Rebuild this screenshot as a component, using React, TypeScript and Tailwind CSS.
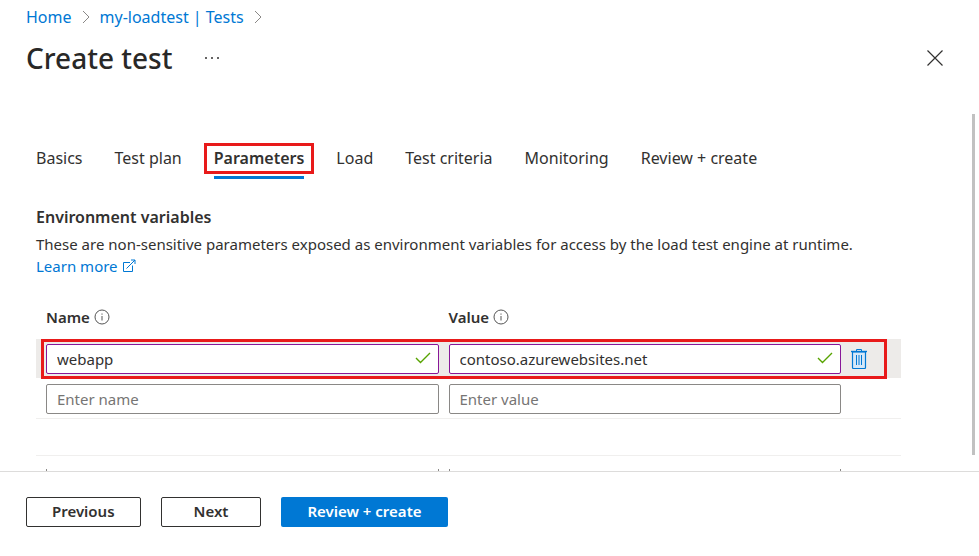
import type { ReactNode } from 'react';

const tabs = ['Basics', 'Test plan', 'Parameters', 'Load', 'Test criteria', 'Monitoring', 'Review + create'];

function Chevron() {
  return (
    <svg viewBox="0 0 8 14" className="h-3.5 w-2" fill="none" stroke="#8a8886" aria-hidden="true">
      <path d="M1 1l6 6-6 6" />
    </svg>
  );
}

function InfoIcon() {
  return (
    <svg viewBox="0 0 16 16" className="size-4" fill="none" stroke="#555" aria-hidden="true">
      <circle cx="8" cy="8" r="7" />
      <path d="M8 7v4.500M8 4.500v1.200" />
    </svg>
  );
}

function ExternalIcon() {
  return (
    <svg viewBox="0 0 14 14" className="size-3.5" fill="none" stroke="#0078d4" aria-hidden="true">
      <path d="M8 3.500H1.500v9h9V6.500M4.500 9.500l8.500-8.500M9 1h4v4" />
    </svg>
  );
}

function CheckIcon() {
  return (
    <svg viewBox="0 0 16 12" className="pointer-events-none absolute top-2 right-2 h-3 w-4" fill="none" stroke="#57a300" strokeWidth="1.4" aria-hidden="true">
      <path d="M1 6l4.500 4.500L15 1" />
    </svg>
  );
}

function TrashIcon() {
  return (
    <svg viewBox="0 0 16 20" className="h-5 w-4" fill="none" stroke="#0078d4" aria-hidden="true">
      <path d="M1.500 3v15.500a1 1 0 001 1h11a1 1 0 001-1V3z" fill="#d5e8f8" strokeWidth="1.200" />
      <path d="M0 2.500h16" strokeWidth="1.400" />
      <path d="M5.500 2.500v-2h5v2" />
      <path d="M5.500 6v10M8 6v10M10.500 6v10" />
    </svg>
  );
}

function Field({ label, value, placeholder }: { label: string; value?: string; placeholder?: string }) {
  const border = value ? 'border-[#881798]' : 'border-[#8a8886]';
  return (
    <div className="relative">
      <input
        aria-label={label}
        defaultValue={value}
        placeholder={placeholder}
        className={`block h-[30px] w-full rounded-xs border bg-white px-2.5 text-[15px] text-[#323130] outline-none placeholder:text-[#767574] ${border}`}
      />
      {value && <CheckIcon />}
    </div>
  );
}

function HeadCell({ children }: { children: ReactNode }) {
  return (
    <th scope="col" className="h-8 pl-2.5 text-left align-top leading-5 font-semibold">
      <span className="flex items-center gap-1">
        {children}
        <InfoIcon />
      </span>
    </th>
  );
}

export default function App() {
  return (
    <div className="flex h-screen flex-col overflow-hidden bg-white font-['Noto_Sans',sans-serif] text-[15px] text-[#323130]">
      <header className="h-[114px] shrink-0 pt-1.5 pr-9 pl-[26px]">
        <nav aria-label="Breadcrumb" className="flex items-center gap-2.5 text-base leading-[22px] text-[#0078d4]">
          <a href="#home">Home</a>
          <Chevron />
          <a href="#tests">my-loadtest | Tests</a>
          <Chevron />
        </nav>
        <div className="mt-3 flex items-center">
          <h1 className="text-[28px] leading-9 font-medium text-[#292827]">Create test</h1>
          <button type="button" aria-label="More" className="ml-8">
            <svg viewBox="0 0 16 4" className="h-1 w-4" fill="#323130" aria-hidden="true">
              <circle cx="2" cy="2" r="1" />
              <circle cx="8" cy="2" r="1" />
              <circle cx="14" cy="2" r="1" />
            </svg>
          </button>
          <button type="button" aria-label="Close" className="ml-auto">
            <svg viewBox="0 0 16 16" className="size-4" fill="none" stroke="#323130" strokeWidth="1.200" aria-hidden="true">
              <path d="M.5.500l15 15M15.500.500l-15 15" />
            </svg>
          </button>
        </div>
      </header>

      <div className="flex min-h-0 flex-1 pr-1">
        <main className="min-w-0 flex-1 overflow-hidden pt-7 pr-[71px] pl-9">
          <div role="tablist" className="flex gap-8 text-base leading-8 whitespace-nowrap">
            {tabs.map((tab) =>
              tab === 'Parameters' ? (
                <button key={tab} type="button" role="tab" aria-selected="true" className="relative border-b-3 border-[#0078d4] pb-0.5 font-semibold">
                  {tab}
                  <span className="pointer-events-none absolute -inset-x-2.5 top-px h-[31px] border-3 border-[#e81a1a]" />
                </button>
              ) : (
                <button key={tab} type="button" role="tab" aria-selected="false" className="border-b-3 border-transparent pb-0.5">
                  {tab}
                </button>
              ),
            )}
          </div>

          <h2 className="mt-[26px] text-base leading-6 font-semibold">Environment variables</h2>
          <p className="mt-1 leading-[22px]">
            These are non-sensitive parameters exposed as environment variables for access by the load test engine at runtime.
            <a href="#learn" className="flex items-center gap-1 text-[#0078d4]">
              Learn more <ExternalIcon />
            </a>
          </p>

          <table className="mt-[30px] w-full table-fixed">
            <thead>
              <tr>
                <HeadCell>Name</HeadCell>
                <HeadCell>Value</HeadCell>
                <th className="w-[60px]" />
              </tr>
            </thead>
            <tbody>
              <tr className="relative h-[39px] bg-[#edebe9]">
                <td className="pl-2.5">
                  <Field label="Name" value="webapp" />
                </td>
                <td className="pl-2.5">
                  <Field label="Value" value="contoso.azurewebsites.net" />
                </td>
                <td className="pl-2.5">
                  <button type="button" aria-label="Delete" className="flex">
                    <TrashIcon />
                  </button>
                  <span className="pointer-events-none absolute top-0 right-3.5 -bottom-px left-[5px] border-3 border-[#e81a1a]" />
                </td>
              </tr>
              <tr className="h-10 border-b border-[#f0efee]">
                <td className="pt-1.5 pl-2.5 align-top">
                  <Field label="New name" placeholder="Enter name" />
                </td>
                <td className="pt-1.5 pl-2.5 align-top">
                  <Field label="New value" placeholder="Enter value" />
                </td>
                <td />
              </tr>
              <tr className="h-[37px] border-b border-[#f0efee]">
                <td colSpan={3} />
              </tr>
              <tr className="h-10">
                <td className="pt-[13px] pl-2.5">
                  <div className="h-7 border-x border-[#8a8886]" />
                </td>
                <td className="pt-[13px] pl-2.5">
                  <div className="h-7 border-x border-[#8a8886]" />
                </td>
                <td />
              </tr>
            </tbody>
          </table>
        </main>
        <div className="mb-4 w-[3px] shrink-0 bg-[#c1c1c1]" />
      </div>

      <footer className="flex h-[85px] shrink-0 items-start gap-5 border-t border-[#dddcdb] pt-[25px] pl-[26px] leading-5 font-semibold">
        <button type="button" className="h-[30px] rounded-xs border border-[#323130] px-[25px] pb-0.5">
          Previous
        </button>
        <button type="button" className="h-[30px] rounded-xs border border-[#323130] px-8 pb-0.5">
          Next
        </button>
        <button type="button" className="h-[30px] rounded-xs bg-[#0078d4] px-[26px] pb-0.5 text-white">
          Review + create
        </button>
      </footer>
    </div>
  );
}
